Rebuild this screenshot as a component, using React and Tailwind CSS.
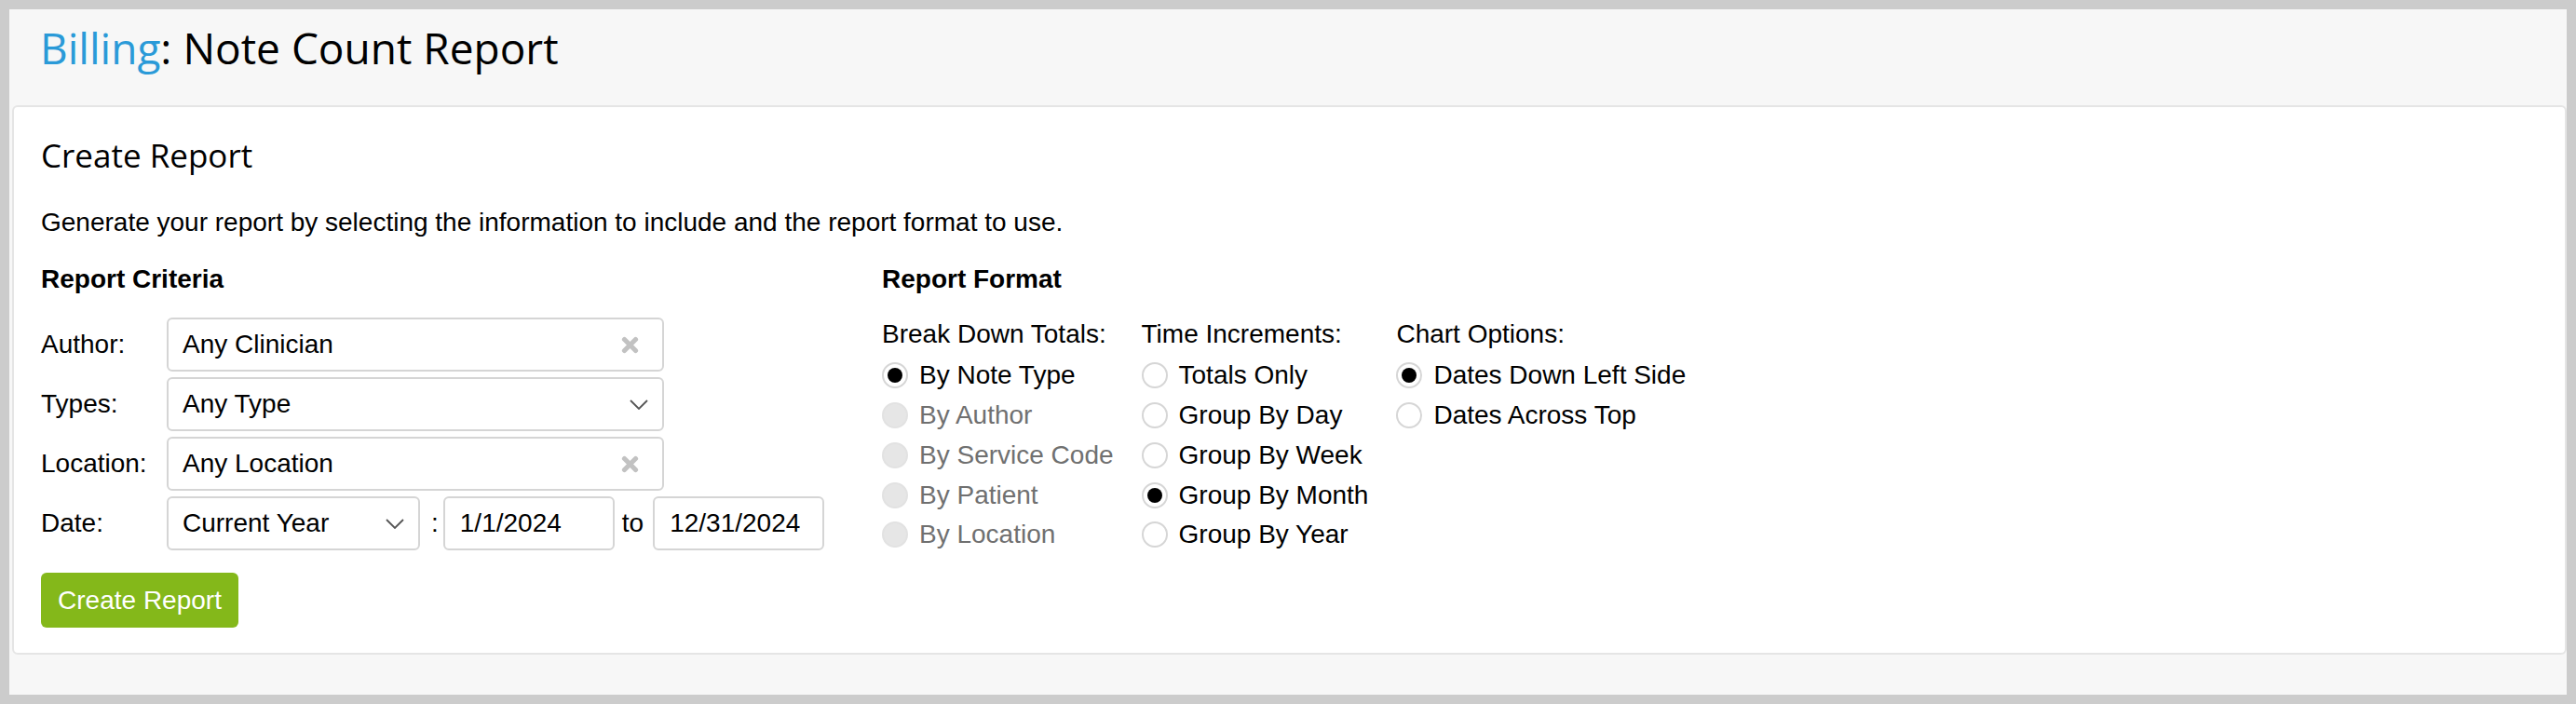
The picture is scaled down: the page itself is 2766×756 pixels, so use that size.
import React from "react";

function ClearIcon() {
  return (
    <svg width="19" height="19" viewBox="0 0 19 19" className="shrink-0">
      <path d="M3.5 3.5 L15.5 15.5 M15.5 3.5 L3.5 15.5" stroke="#c2c2c2" strokeWidth="5.2" strokeLinecap="round" />
    </svg>
  );
}

function Chevron() {
  return (
    <svg width="20" height="11" viewBox="0 0 20 11" className="shrink-0">
      <polyline points="1,1 10,10 19,1" fill="none" stroke="#555" strokeWidth="1.8" />
    </svg>
  );
}

function Field({ children, icon, className }) {
  return (
    <div
      className={`h-[58px] border-2 border-[#d5d5d5] rounded-[6px] bg-white flex items-center pl-[15px] ${className}`}
    >
      <span className="flex-1">{children}</span>
      {icon}
    </div>
  );
}

function Radio({ checked, disabled }) {
  if (disabled) {
    return <span className="w-[28px] h-[28px] rounded-full bg-[#e6e6e6] border-2 border-[#e2e2e2] shrink-0" />;
  }
  return (
    <span className="w-[28px] h-[28px] rounded-full bg-white border-2 border-[#d6d6d6] flex items-center justify-center shrink-0">
      {checked && <span className="w-[16px] h-[16px] rounded-full bg-black" />}
    </span>
  );
}

function OptionGroup({ title, options }) {
  return (
    <div className="flex flex-col">
      <div className="leading-[32px] mb-[7px]">{title}</div>
      {options.map((o) => (
        <div key={o.label} className="flex items-center gap-[12px] h-[42.75px]">
          <Radio checked={o.checked} disabled={o.disabled} />
          <span className={o.disabled ? "text-[#707070]" : "text-black"}>{o.label}</span>
        </div>
      ))}
    </div>
  );
}

export default function App() {
  const criteria = [
    { label: "Author:", value: "Any Clinician", icon: <span className="mr-[25px] flex"><ClearIcon /></span> },
    { label: "Types:", value: "Any Type", icon: <span className="mr-[15px] flex"><Chevron /></span> },
    { label: "Location:", value: "Any Location", icon: <span className="mr-[25px] flex"><ClearIcon /></span> },
  ];

  return (
    <div className="h-[756px] bg-[#cccccc] p-[10px] font-['Liberation_Sans',Arial,sans-serif] text-[28px] text-black">
      <div className="h-full bg-[#f7f7f7] flex flex-col">
        <div className="h-[103px] pl-[33px] pt-[13px] shrink-0">
          <h1 className="font-['Open_Sans',sans-serif] font-normal text-[46px] leading-[56px]">
            <span className="text-[#2a9ad8]">Billing</span>: Note Count Report
          </h1>
        </div>

        <div className="ml-[3px] h-[590px] bg-white border-2 border-[#e5e5e5] rounded-[6px] pl-[29px] pt-[33px]">
          <h2 className="font-['Open_Sans',sans-serif] text-[35px] leading-[38px]">Create Report</h2>
          <p className="mt-[37px] leading-[32px]">
            Generate your report by selecting the information to include and the report format to use.
          </p>

          <div className="flex mt-[29px]">
            <div className="w-[903px] shrink-0">
              <div className="font-bold leading-[32px]">Report Criteria</div>
              <div className="mt-[25px] flex flex-col gap-[6px]">
                {criteria.map((c) => (
                  <div key={c.label} className="flex items-center">
                    <span className="w-[135px] shrink-0">{c.label}</span>
                    <Field className="w-[534px]" icon={c.icon}>{c.value}</Field>
                  </div>
                ))}
                <div className="flex items-center">
                  <span className="w-[135px] shrink-0">Date:</span>
                  <Field className="w-[272px]" icon={<span className="mr-[15px] flex"><Chevron /></span>}>
                    Current Year
                  </Field>
                  <span className="ml-[12px] mr-[5px]">:</span>
                  <Field className="w-[184px] pl-[16px]">1/1/2024</Field>
                  <span className="ml-[8px] mr-[10px]">to</span>
                  <Field className="w-[184px] pl-[16px]">12/31/2024</Field>
                </div>
              </div>
              <button className="mt-[24px] h-[59px] w-[212px] rounded-[6px] bg-[#84b81a] text-white text-[28px] flex items-center justify-center">
                Create Report
              </button>
            </div>

            <div className="flex flex-col">
              <div className="font-bold leading-[32px]">Report Format</div>
              <div className="mt-[27px] flex gap-[30px]">
                <OptionGroup
                  title="Break Down Totals:"
                  options={[
                    { label: "By Note Type", checked: true },
                    { label: "By Author", disabled: true },
                    { label: "By Service Code", disabled: true },
                    { label: "By Patient", disabled: true },
                    { label: "By Location", disabled: true },
                  ]}
                />
                <OptionGroup
                  title="Time Increments:"
                  options={[
                    { label: "Totals Only" },
                    { label: "Group By Day" },
                    { label: "Group By Week" },
                    { label: "Group By Month", checked: true },
                    { label: "Group By Year" },
                  ]}
                />
                <OptionGroup
                  title="Chart Options:"
                  options={[
                    { label: "Dates Down Left Side", checked: true },
                    { label: "Dates Across Top" },
                  ]}
                />
              </div>
            </div>
          </div>
        </div>
      </div>
    </div>
  );
}
